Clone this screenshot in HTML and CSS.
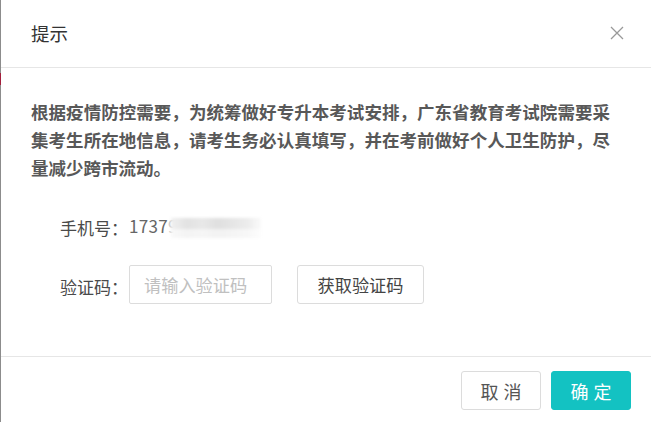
FILE: index.html
```html
<!DOCTYPE html>
<html lang="zh-CN">
<head>
  <meta charset="UTF-8" />
  <meta name="viewport" content="width=device-width, initial-scale=1" />
  <title>提示</title>
  <link rel="stylesheet" href="styles.css">
</head>
<body>

  <div class="dialog">
    <div class="dialog-header">
      <span class="dialog-title">提示</span>
      <button class="dialog-close" aria-label="关闭">
        <svg width="14" height="14" viewBox="0 0 14 14">
          <path d="M1 1L13 13M13 1L1 13" stroke="#999" stroke-width="1.3" fill="none" />
        </svg>
      </button>
    </div>

    <div class="dialog-body">
      <p class="notice">
        <span class="notice-line">根据疫情防控需要，为统筹做好专升本考试安排，广东省教育考试院需要采</span>
        <span class="notice-line">集考生所在地信息，请考生务必认真填写，并在考前做好个人卫生防护，尽</span>
        量减少跨市流动。
      </p>

      <div class="form-row">
        <span class="form-label">手机号：</span>
        <span class="phone">1737<span class="phone-fade">9</span><span class="phone-blur"></span></span>
      </div>

      <div class="form-row">
        <span class="form-label">验证码：</span>
        <input type="text" class="code-input" placeholder="请输入验证码" />
        <button class="btn btn-code">获取验证码</button>
      </div>
    </div>

    <div class="dialog-footer">
      <button class="btn btn-cancel">取消</button>
      <button class="btn btn-primary">确定</button>
    </div>
  </div>

</body>
</html>
```

FILE: styles.css
```css
html, body {
  margin: 0;
  padding: 0;
  height: 100%;
  overflow: hidden;
}

body {
  font-family: "Noto Sans CJK SC", "Noto Sans", sans-serif;
  color: #333;
  /* page behind the dialog, only a 1px sliver shows on the left */
  background:
    linear-gradient(to bottom, transparent 73px, #a31f3c 73px, #a31f3c 85px, transparent 85px) left top / 1px 100% no-repeat,
    #8c8c8c;
  display: flex;
}

.dialog {
  margin-left: 1px;
  flex: 1;
  background: #fff;
  display: flex;
  flex-direction: column;
}

.dialog-header {
  height: 67px;
  border-bottom: 1px solid #e6e6e6;
  display: flex;
  align-items: center;
  justify-content: space-between;
  padding: 0 27px 0 30px;
}

.dialog-title {
  font-size: 18.5px;
  color: #333;
  margin-top: -2px;
}

.dialog-close {
  border: none;
  background: none;
  padding: 0;
  width: 14px;
  height: 14px;
  cursor: pointer;
  display: flex;
  margin-top: -1px;
}

.dialog-body {
  padding: 30px 30px 0;
  height: 258px;
  border-bottom: 1px solid #e6e6e6;
}

.notice {
  margin: 0;
  font-size: 17.5px;
  line-height: 28px;
  font-weight: 700;
  color: #585858;
}

.notice-line {
  display: block;
  white-space: nowrap;
  text-align-last: justify;
  width: 579px;
}

.form-row {
  display: flex;
  align-items: center;
  height: 39px;
  margin-left: 29px;
  font-size: 17px;
  color: #555;
}

.form-row + .form-row {
  margin-top: 20px;
}

.notice + .form-row {
  margin-top: 24px;
}

.form-label {
  width: 69px;
  color: #4a4a4a;
  padding-top: 3px;
}

.phone {
  display: flex;
  align-items: center;
  color: #666;
  letter-spacing: 0.3px;
}

.phone-fade {
  color: #c8c8c8;
}

.phone-blur {
  display: inline-block;
  width: 90px;
  height: 20px;
  margin-left: -7px;
  margin-top: 4px;
  background:
    linear-gradient(to bottom, transparent 55%, rgba(255,255,255,0.6) 55%),
    linear-gradient(90deg, #f0f0f0 0%, #e2e2e2 18%, #e8e8e8 35%, #dfdfdf 52%, #e6e6e6 70%, #ececec 85%, #fafafa 100%);
  filter: blur(1.5px);
}

.code-input {
  width: 143px;
  height: 39px;
  box-sizing: border-box;
  border: 1px solid #dcdcdc;
  border-radius: 2px;
  padding: 0 14px;
  font-family: inherit;
  font-size: 17.2px;
  color: #333;
  outline: none;
}

.code-input::placeholder {
  color: #c0c0c0;
}

.btn {
  font-family: inherit;
  height: 39px;
  box-sizing: border-box;
  border-radius: 3px;
  cursor: pointer;
  padding: 0;
}

.btn-code {
  margin-left: 25px;
  width: 127px;
  border: 1px solid #dcdcdc;
  background: #fff;
  font-size: 17.2px;
  color: #444;
}

.dialog-footer {
  display: flex;
  justify-content: flex-end;
  gap: 10px;
  padding: 14px 20px 0;
}

.btn-cancel,
.btn-primary {
  width: 80px;
  font-size: 18px;
  letter-spacing: 5px;
  text-indent: 5px;
}

.btn-cancel {
  border: 1px solid #dcdcdc;
  background: #fff;
  color: #555;
}

.btn-primary {
  border: 1px solid #13c2c2;
  background: #13c2c2;
  color: #fff;
}
```
